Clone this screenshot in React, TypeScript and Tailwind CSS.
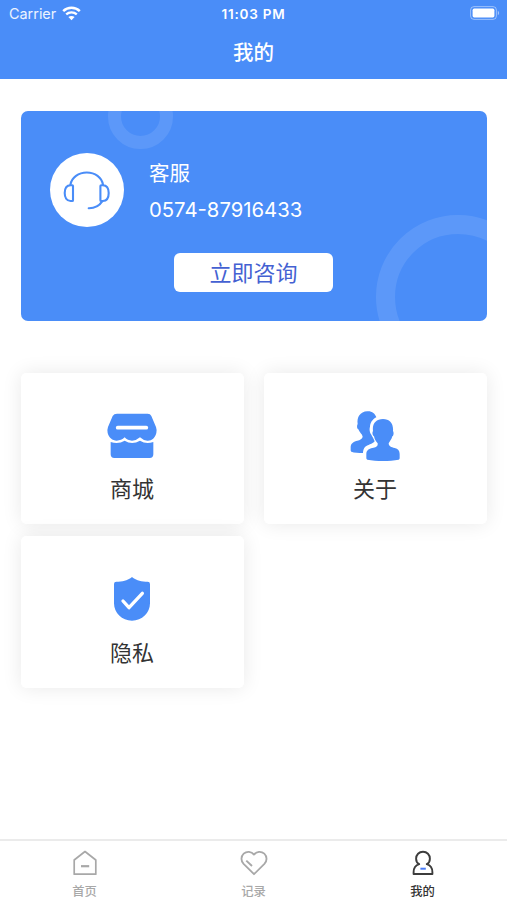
import React from "react";

const StatusBar = () => (
  <div className="grid h-[27px] grid-cols-3 items-center px-[9px] font-['Inter','Noto_Sans_CJK_SC',sans-serif] text-[13.5px] text-white">
    <div className="flex items-center gap-[6px]">
      <span className="text-[14.4px] leading-[27px] text-white/90">Carrier</span>
      <svg className="-mt-px" width="19" height="15" viewBox="0 0 19 15" fill="none">
        <path d="M1.2 5.2C5.8 .7 13.2 .7 17.8 5.2" stroke="currentColor" strokeWidth="2.5" />
        <path d="M4.2 8.4C7.2 5.6 11.8 5.6 14.8 8.4" stroke="currentColor" strokeWidth="2.3" />
        <path d="M6.4 11.1C8.2 9.5 10.8 9.5 12.6 11.1L9.5 14.3Z" fill="currentColor" />
      </svg>
    </div>
    <span className="pt-px text-center font-semibold tracking-[0.8px] whitespace-nowrap">11:03 PM</span>
    <svg className="-mr-[3px] -mt-px justify-self-end" width="31" height="14" viewBox="0 0 31 14" fill="none">
      <rect x=".6" y=".6" width="25.8" height="12.8" rx="3.4" stroke="#fff" strokeOpacity=".45" />
      <rect x="2.6" y="2.6" width="21.8" height="8.8" rx="1.6" fill="#fff" />
      <path d="M27.8 4.8C29.6 5.6 29.6 8.4 27.8 9.2Z" fill="#fff" fillOpacity=".5" />
    </svg>
  </div>
);

const HeadsetIcon = () => (
  <svg width="74" height="74" viewBox="0 0 74 74" fill="none" stroke="#4a8df8" strokeWidth="2.1" strokeLinecap="round" strokeLinejoin="round">
    <path d="M20.4 31.6C21.8 24.4 28.4 19.5 36.8 19.5C45.2 19.5 51.7 24.4 53 31.6" />
    <path d="M20.6 32.2H22.2Q23 32.2 23 33V47.2Q23 48 22.2 48H20.6C16.6 48 14.7 44.6 14.7 40.1C14.7 35.6 16.6 32.2 20.6 32.2Z" />
    <path d="M52.8 32.2H51.2Q50.4 32.2 50.4 33V47.2Q50.4 48 51.2 48H52.8C56.8 48 58.7 44.6 58.7 40.1C58.7 35.6 56.8 32.2 52.8 32.2Z" />
    <path d="M52.2 48.4C49.2 53 44.4 55.3 38.7 55.2" />
  </svg>
);

const StoreIcon = () => (
  <svg width="50" height="46" viewBox="0 0 150 138">
    <path
      d="M30 2H122Q130 2 133 9L147 42Q150 50 148 60C144 75 134 84 121 83Q108 82 99 73Q88 83 75 83Q62 83 53 73Q43 83 29 83C16 83 6 74 2 60Q0 50 3 42L17 9Q21 2 30 2Z"
      fill="#4a8df8"
    />
    <path d="M11 87Q34 95 53 83Q75 97 99 83Q117 95 139 87V124Q139 135 128 135H22Q11 135 11 124Z" fill="#4a8df8" />
    <path d="M32 44H118" stroke="#fff" strokeWidth="11" strokeLinecap="round" />
  </svg>
);

const PeopleIcon = () => (
  <svg width="50" height="50" viewBox="0 0 150 150" fill="#4a8df8">
    <path d="M52 1C66 0 75 8 79 19C67 25 60 36 60 48C58 52 58 64 64 71C67 77 71 83 74 91C68 100 52 101 45 108C41 113 39 119 39 126C26 126 13 125 4 122Q2 121 2 118V107C3 96 12 91 22 89C30 87 37 83 38 77C37 70 28 64 25 55C21 54 20 44 23 39C20 19 30 2 52 1Z" />
    <path d="M99 24C119 24 131 38 129 60C132 64 131 74 127 76C125 86 118 92 116 97C116 106 124 109 134 111C144 113 149 119 149 129V142Q149 145 146 146C119 151 79 151 52 146Q49 145 49 142V129C49 118 57 113 67 111C77 109 84 106 83 97C79 92 74 87 72 76C67 74 66 64 69 60C66 38 78 24 99 24Z" />
  </svg>
);

const ShieldIcon = () => (
  <svg width="38" height="46" viewBox="0 0 114 138">
    <path d="M57 3C67 11 81 18 102 17Q111 16 111 24V82C111 111 87 134 57 134C27 134 3 111 3 82V24Q3 16 12 17C33 18 47 11 57 3Z" fill="#4a8df8" />
    <path d="M30 75L48 95L88 52" fill="none" stroke="#fff" strokeWidth="10" strokeLinecap="round" strokeLinejoin="round" />
  </svg>
);

const HomeIcon = () => (
  <svg width="26" height="26" viewBox="0 0 26 26" fill="none" stroke="currentColor" strokeWidth="1.7" strokeLinejoin="round">
    <path d="M2.2 10L13 1.5L23.8 10V24.2H2.2Z" />
    <path d="M9 16.2H17.2" strokeWidth="2.2" />
  </svg>
);

const HeartIcon = () => (
  <svg width="28" height="26" viewBox="0 0 28 26" fill="none" stroke="currentColor" strokeWidth="1.8" strokeLinejoin="round">
    <path d="M14 4.6C16.5 1.2 21.3 .9 24.3 3.7C27.4 6.7 27.1 11.1 24.4 13.9L14 24.2L3.6 13.9C.9 11.1.6 6.7 3.7 3.7C6.7.9 11.5 1.2 14 4.6Z" />
    <path d="M6.3 10.6L12 16" strokeWidth="1.9" />
  </svg>
);

const ProfileIcon = () => (
  <svg width="26" height="26" viewBox="0 0 26 26" fill="none" stroke="#3c3c3c" strokeWidth="1.9" strokeLinejoin="round">
    <path d="M9.2 14.2C6.9 12.9 6.1 10.8 6.1 8.7C6.1 4.8 9 1.8 13 1.8C17 1.8 19.9 4.8 19.9 8.7C19.9 10.8 19.1 12.9 16.8 14.2C20.6 15.3 22.4 18.2 22.4 22.3V24H3.6V22.3C3.6 18.2 5.4 15.3 9.2 14.2Z" />
    <path d="M10.4 18.7H15.8" stroke="#4a7df8" strokeWidth="2" />
  </svg>
);

const menuItems = [
  { label: "商城", icon: <StoreIcon /> },
  { label: "关于", icon: <PeopleIcon /> },
  { label: "隐私", icon: <ShieldIcon /> },
];

const tabs = [
  { label: "首页", icon: <HomeIcon />, active: false },
  { label: "记录", icon: <HeartIcon />, active: false },
  { label: "我的", icon: <ProfileIcon />, active: true },
];

const App = () => {
  return (
    <div className="flex h-[900px] w-[507px] flex-col bg-white font-['Noto_Sans_CJK_SC',sans-serif]">
      <header className="h-[79px] shrink-0 bg-[#4a8df8]">
        <StatusBar />
        <h1 className="text-center text-[20.5px] leading-[48px] font-medium text-white">我的</h1>
      </header>

      <main className="flex-1 px-[20.5px] pt-8">
        <section className="relative h-[210px] overflow-hidden rounded-[7px] bg-[#4a8df8] pt-[42px]">
          {/* decorative rings */}
          <div className="absolute -top-[27px] left-[87px] h-[65px] w-[65px] rounded-full border-[13px] border-white/10" />
          <div className="absolute top-[104px] left-[355px] h-[164px] w-[164px] rounded-full border-[19px] border-white/10" />
          <div className="flex pl-[29px]">
            <div className="h-[74px] w-[74px] rounded-full bg-white">
              <HeadsetIcon />
            </div>
            <div className="pl-[25.5px] text-white">
              <p className="text-[20.5px] leading-[38px]">客服</p>
              <p className="font-['Inter',sans-serif] text-[20.3px] leading-[37px]">0574-87916433</p>
            </div>
          </div>
          <button className="mx-auto mt-[24.5px] block h-[39.5px] w-[159px] rounded-[6px] bg-white pb-[2px] text-[22px] leading-[37px] text-[#4461d2]">
            立即咨询
          </button>
        </section>

        <section className="mt-[51.5px] grid grid-cols-2 gap-x-5 gap-y-3">
          {menuItems.map((item) => (
            <div
              key={item.label}
              className="flex h-[151.5px] flex-col items-center rounded-[5px] bg-white pt-[35.5px] shadow-[0_0_20px_rgba(0,0,0,0.09)]"
            >
              <div className="flex h-[55px] items-center justify-center">{item.icon}</div>
              <span className="mt-[8px] text-[22px] leading-8 text-[#333]">{item.label}</span>
            </div>
          ))}
        </section>
      </main>

      <nav className="grid h-[61px] shrink-0 grid-cols-3 border-t-2 border-[#ebebeb] bg-white">
        {tabs.map((tab) => (
          <div
            key={tab.label}
            className={
              tab.active
                ? "flex flex-col items-center pt-[9px] text-[#333]"
                : "flex flex-col items-center pt-[9px] text-[#a8a8a8]"
            }
          >
            {tab.icon}
            <span className="mt-[6px] text-[12.3px] leading-[18px] font-medium">{tab.label}</span>
          </div>
        ))}
      </nav>
    </div>
  );
};

export default App;
